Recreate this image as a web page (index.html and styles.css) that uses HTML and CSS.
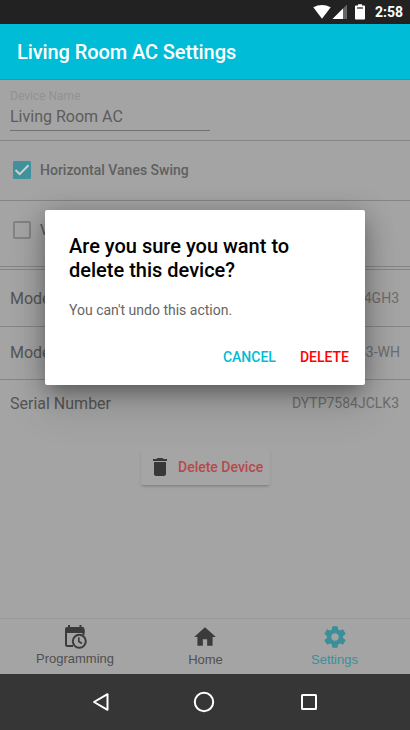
FILE: index.html
```html
<!DOCTYPE html>
<html lang="en">
<head>
<meta charset="utf-8">
<title>Living Room AC Settings</title>
<link rel="stylesheet" href="styles.css">
</head>
<body>
<div class="phone">
  <div class="status">
    <svg width="56" height="24" viewBox="0 0 56 24">
      <path fill="#fff" d="M.3 7.200Q9 2.600 17.700 7.200L9 18.800Z"/>
      <path fill="#666" d="M34 4.500V19H19.500Z"/>
      <path fill="#fff" d="M30 8.500V19H19.500Z"/>
      <path fill="#fff" d="M45 4.200h4v1.200h2.200q.8 0 .8.800v12.600q0 .8-.8.800h-8.400q-.8 0-.8-.8V6.200q0-.8.8-.8H45z"/>
      <path fill="#222" d="M44 7.400h6v1.200h-6z"/>
    </svg>
    <span class="clock">2:58</span>
  </div>
  <header class="appbar">Living Room AC Settings</header>
  <main class="content">
    <section class="name">
      <label class="caption">Device Name</label>
      <div class="field">Living Room AC</div>
    </section>
    <section class="option">
      <svg width="18" height="18" viewBox="0 0 18 18"><rect width="18" height="18" rx="1.500" fill="#3f929c"/><path d="M2.500 9l4.200 4.200L15.500 4.300" fill="none" stroke="#d0d0d0" stroke-width="2"/></svg>
      <span>Horizontal Vanes Swing</span>
    </section>
    <section class="option second">
      <svg width="18" height="18" viewBox="0 0 18 18"><rect x="1" y="1" width="16" height="16" rx="1" fill="none" stroke="#828282" stroke-width="2"/></svg>
      <span>Vertical Vanes Swing</span>
    </section>
    <section class="info model"><span>Model Name</span><span class="value">AC-74GH3</span></section>
    <section class="info number"><span>Model Number</span><span class="value up">AC43-WH</span></section>
    <section class="info serial"><span>Serial Number</span><span class="value">DYTP7584JCLK3</span></section>
    <button class="remove">
      <svg width="24" height="24" viewBox="0 0 24 24"><path fill="#383838" d="M6 19c0 1.100.9 2 2 2h8c1.100 0 2-.9 2-2V7H6v12zM19 4h-3.500l-1-1h-5l-1 1H5v2h14V4z"/></svg>
      <span>Delete Device</span>
    </button>
  </main>
  <nav class="tabs">
    <div class="tab">
      <svg width="24" height="26" viewBox="0 0 24 26"><g fill="none" stroke="#3b3b3b" stroke-width="2"><path d="M10 22H4.500Q3 22 3 20.500V6M20.500 6v5"/><circle cx="16.300" cy="17.300" r="6.500"/><path stroke-width="1.600" d="M15.800 13.300v4.200l3.200 2"/></g><path fill="#3b3b3b" d="M2 5q0-2 2-2h1V1h2v2h9.500V1h2v2h1q2 0 2 2v4H2z"/></svg>
      <span>Programming</span>
    </div>
    <div class="tab home">
      <svg width="26" height="26" viewBox="0 0 24 24"><path fill="#3b3b3b" d="M10 20v-6h4v6h5v-8h3L12 3 2 12h3v8z"/></svg>
      <span>Home</span>
    </div>
    <div class="tab active">
      <svg width="26" height="26" viewBox="0 0 24 24"><path fill="#3b8f99" d="M19.430 12.980c.04-.32.07-.64.07-.98s-.03-.66-.07-.98l2.110-1.650c.19-.15.24-.42.12-.64l-2-3.460c-.12-.22-.39-.3-.61-.22l-2.490 1c-.52-.4-1.080-.73-1.690-.98l-.38-2.650C14.460 2.180 14.250 2 14 2h-4c-.25 0-.46.18-.49.42l-.38 2.650c-.61.25-1.170.59-1.690.98l-2.490-1c-.23-.09-.49 0-.61.22l-2 3.460c-.13.22-.07.49.12.64l2.110 1.650c-.04.32-.07.65-.07.98s.03.66.07.98l-2.110 1.650c-.19.15-.24.42-.12.64l2 3.460c.12.22.39.3.61.22l2.490-1c.52.4 1.080.73 1.690.98l.38 2.650c.03.24.24.42.49.42h4c.25 0 .46-.18.49-.42l.38-2.650c.61-.25 1.170-.59 1.690-.98l2.490 1c.23.09.49 0 .61-.22l2-3.460c.12-.22.07-.49-.12-.64l-2.110-1.650zM12 15.500c-1.930 0-3.500-1.570-3.500-3.500s1.570-3.500 3.500-3.500 3.500 1.570 3.500 3.500-1.570 3.500-3.500 3.500z"/></svg>
      <span>Settings</span>
    </div>
  </nav>
  <div class="system">
    <svg width="24" height="24" viewBox="0 0 24 24"><path d="M18.500 4.200v15.600L5 12z" fill="none" stroke="#fff" stroke-width="2" stroke-linejoin="round"/></svg>
    <svg width="24" height="24" viewBox="0 0 24 24"><circle cx="12" cy="12" r="9.200" fill="none" stroke="#fff" stroke-width="2"/></svg>
    <svg width="24" height="24" viewBox="0 0 24 24"><rect x="5" y="5" width="14" height="14" rx=".5" fill="none" stroke="#fff" stroke-width="2"/></svg>
  </div>
  <div class="dialog" role="dialog">
    <h2>Are you sure you want to<br>delete this device?</h2>
    <p>You can't undo this action.</p>
    <div class="actions"><span class="cancel">CANCEL</span><span class="delete">DELETE</span></div>
  </div>
</div>
</body>
</html>
```

FILE: styles.css
```css
* { box-sizing: border-box; }
body { margin: 0; font-family: Roboto, sans-serif; }
svg { display: block; flex: none; }
.phone { position: relative; width: 410px; height: 730px; overflow: hidden; background: #a4a4a4; display: flex; flex-direction: column; }
.status { height: 24px; flex: none; background: #222; display: flex; justify-content: flex-end; align-items: center; padding-right: 7px; color: #fff; }
.clock { width: 28px; margin-left: 6px; font-size: 14px; font-weight: 700; line-height: 24px; white-space: nowrap; }
.appbar { height: 56px; flex: none; background: #00bcd6; border-bottom: 1px solid #3f8f9a; padding-left: 17px; color: #fff; font-size: 20px; font-weight: 500; letter-spacing: -.09px; line-height: 56px; }
.content { flex: 1; display: flex; flex-direction: column; }
.name { height: 61px; border-bottom: 1px solid #858585; padding: 9px 10px 0; }
.caption { display: block; height: 14px; line-height: 14px; font-size: 12px; color: #929292; }
.field { width: 200px; height: 28px; border-bottom: 1px solid #717171; font-size: 16px; line-height: 27px; color: #5c5c5c; }
.option { height: 60px; border-bottom: 1px solid #858585; padding: 0 0 1px 13px; display: flex; align-items: center; gap: 9px; font-size: 14px; font-weight: 500; color: #606060; }
.second { height: 66px; padding-bottom: 7px; }
.info { display: flex; justify-content: space-between; align-items: center; padding: 0 11px 0 10px; border-bottom: 1px solid #858585; font-size: 16px; color: #555; }
.value { font-size: 14px; color: #6c6c6c; }
.up { margin-top: -2px; }
.model { height: 58px; margin-top: 2px; border-top: 1px solid #858585; }
.number { height: 53px; padding-right: 10px; padding-bottom: 1px; }
.serial { height: 48px; border-bottom: 0; padding-bottom: 2px; }
.remove { align-self: center; width: 129px; height: 36px; margin: 21px 0 0 1px; border: 0; border-radius: 2px; background: #a5a5a5; box-shadow: 0 2px 3px -1px #777; padding: 0 7px; display: flex; align-items: center; gap: 6px; white-space: nowrap; font: 500 14px Roboto, sans-serif; color: #b54a4a; }
.tabs { height: 56px; flex: none; border-top: 1px solid #999; display: flex; }
.tab { width: 130px; padding-top: 5px; display: flex; flex-direction: column; align-items: center; gap: 2px; font: 13px/15px "Liberation Sans", sans-serif; color: #505050; }
.tab:first-child { margin-left: 10px; gap: 1px; }
.home span { padding-left: 1px; }
.active { color: #3b8f99; }
.active span { margin-right: 1px; }
.system { height: 56px; flex: none; background: #363636; display: flex; align-items: center; padding-left: 89px; gap: 80px; }
.system svg:first-child { margin-right: -1px; }
.system svg:last-child { margin-left: 1px; }
.dialog { position: absolute; left: 45px; top: 210px; width: 320px; height: 175px; padding: 24px 16px 0 24px; background: #fff; border-radius: 2px; box-shadow: 0 11px 15px -7px rgba(0,0,0,.2), 0 24px 38px 3px rgba(0,0,0,.1), 0 4px 28px rgba(0,0,0,.3); }
h2 { margin: 0; font-size: 20px; line-height: 24px; font-weight: 500; color: #000; }
p { margin: 18px 0 0; font-size: 14px; line-height: 20px; color: #666; }
.actions { display: flex; justify-content: flex-end; gap: 24px; margin-top: 27px; font-size: 14px; line-height: 20px; font-weight: 500; }
.cancel { color: #00bcd6; }
.delete { color: #f00; }
```
